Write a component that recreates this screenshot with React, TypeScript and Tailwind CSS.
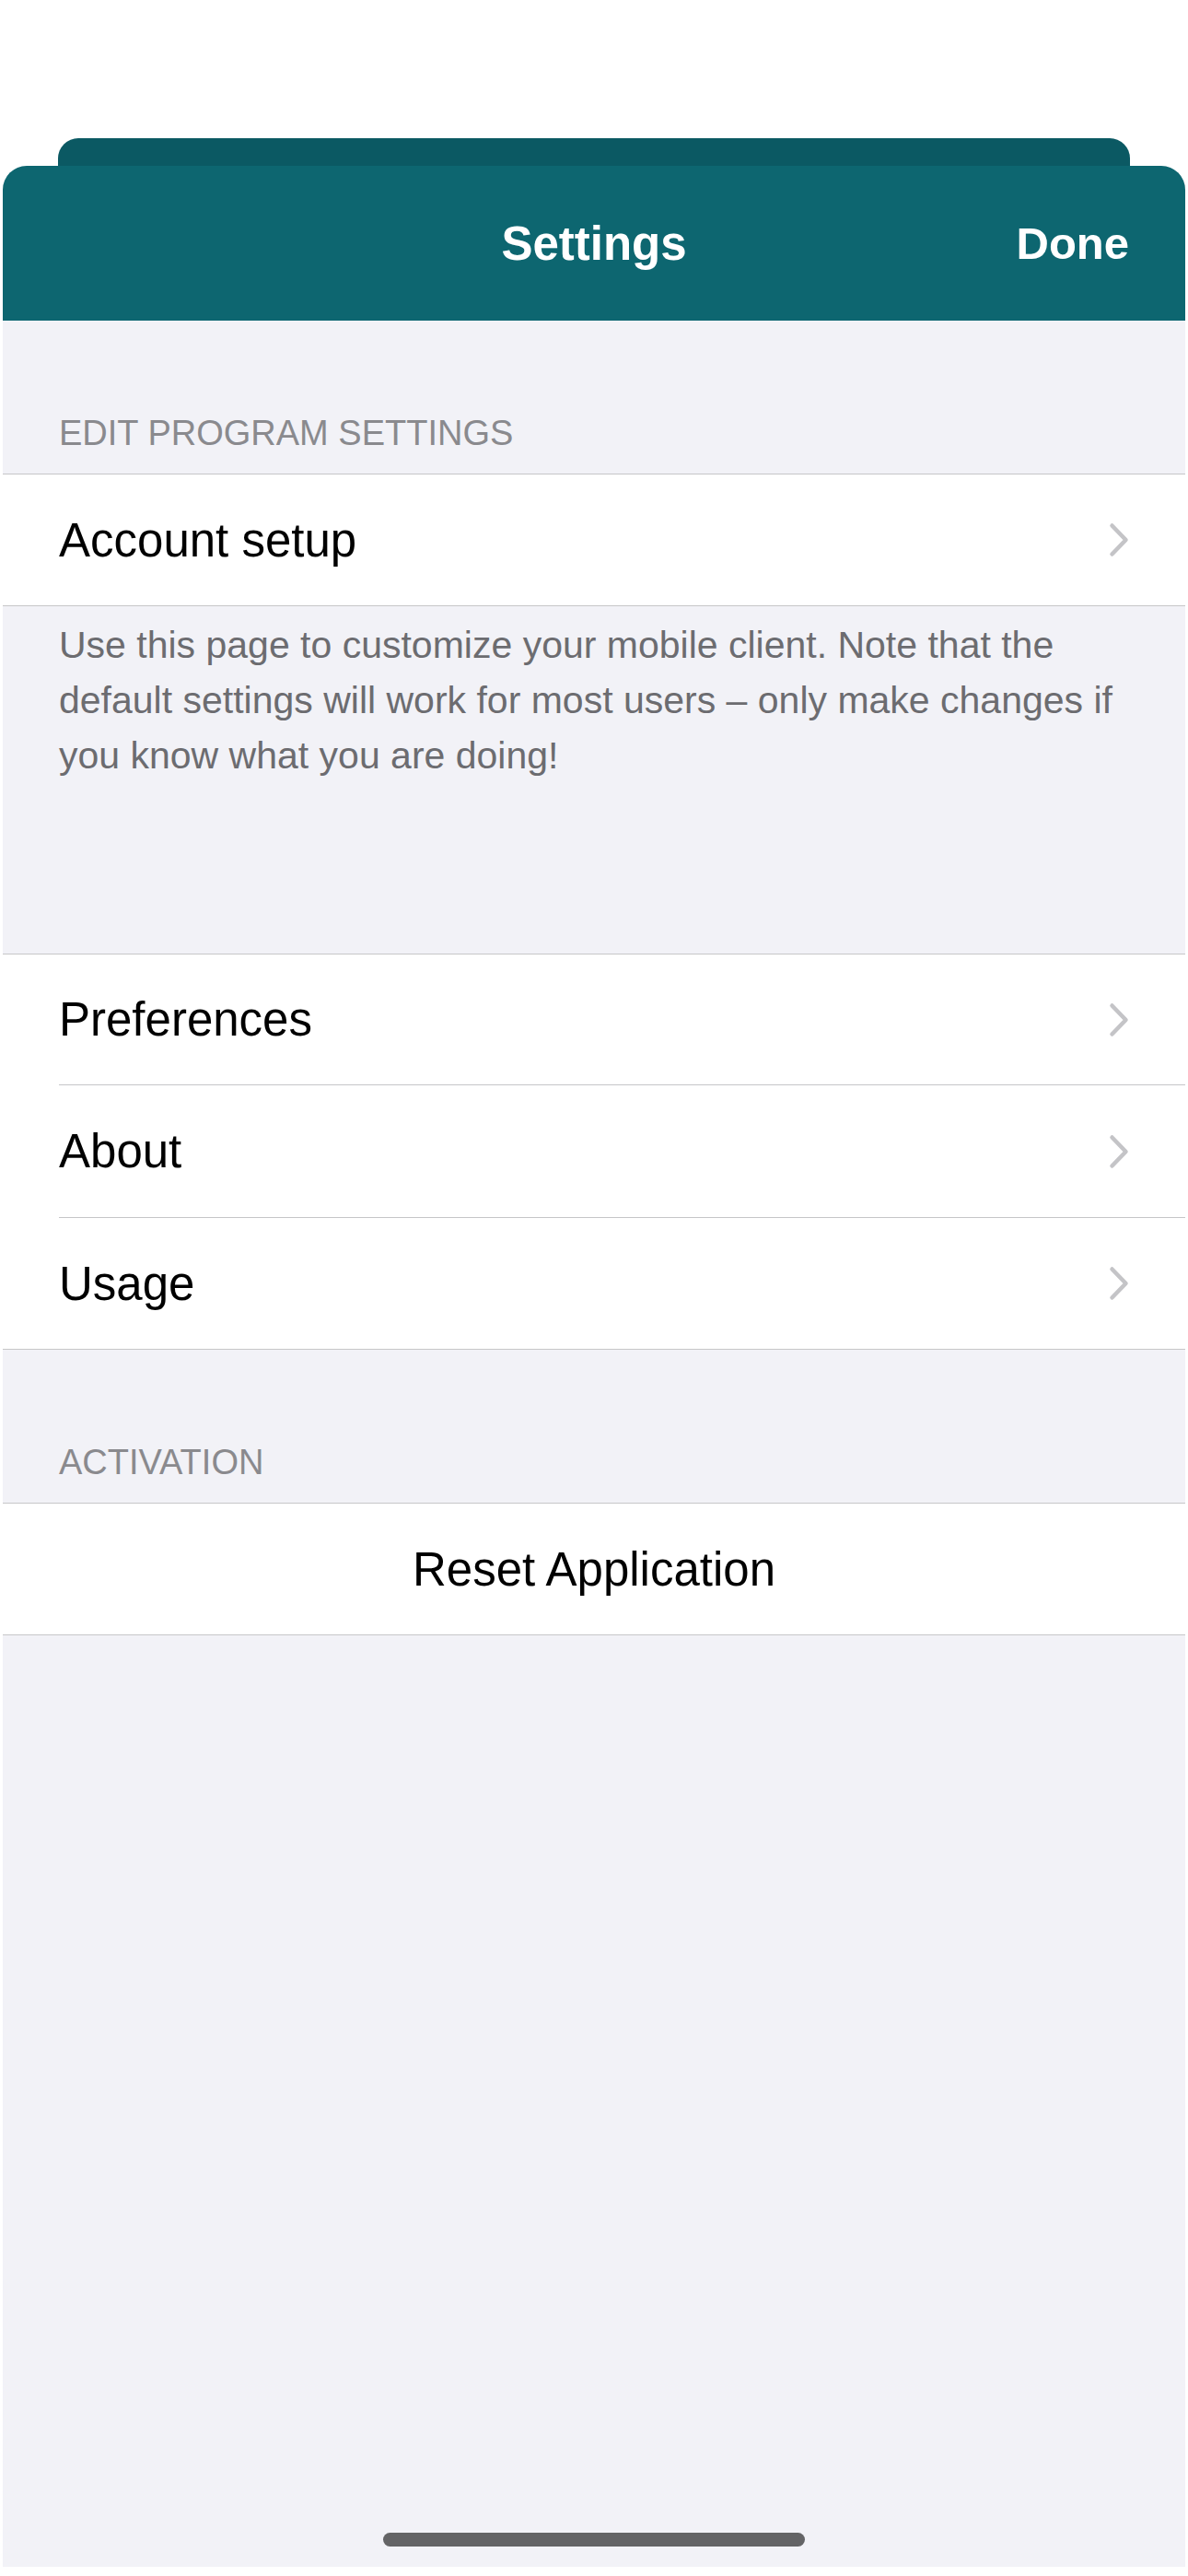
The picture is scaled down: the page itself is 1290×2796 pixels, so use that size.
import { ReactNode } from 'react';

const font = { fontFamily: '"Liberation Sans", Arial, sans-serif' };

function Chevron() {
  return (
    <svg width="22" height="38" viewBox="0 0 22 38" fill="none" className="shrink-0">
      <path d="M3.5 3.5 L18.5 19 L3.5 34.5" stroke="#c4c4c7" strokeWidth="4.5" strokeLinecap="round" strokeLinejoin="round" />
    </svg>
  );
}

function SectionHeader({ children }: { children: ReactNode }) {
  return (
    <div className="h-[166px] flex items-end pl-[61px] pb-[25px]">
      <span className="text-[38px] leading-[38px] text-[#8a8a8e] uppercase">{children}</span>
    </div>
  );
}

function Row({ label, last, h = 'h-[142px]' }: { label: string; last?: boolean; h?: string }) {
  return (
    <div className="pl-[61px] bg-white">
      <div className={`${h} flex items-center justify-between pr-[61px] ${last ? '' : 'border-b border-[#c6c6c8]'}`}>
        <span className="text-[51px] leading-none text-black">{label}</span>
        <Chevron />
      </div>
    </div>
  );
}

export default function App() {
  return (
    <div className="w-[1290px] h-[2796px] bg-white flex flex-col pt-[150px] pb-[10px]" style={font}>
      {/* stacked sheet behind */}
      <div className="h-[30px] mx-[63px] rounded-t-[22px] bg-[#0b5963]" />

      {/* front sheet */}
      <div className="flex-1 mx-[3px] rounded-t-[26px] overflow-hidden bg-[#f2f2f7] flex flex-col">
        <div className="h-[168px] bg-[#0d6670] relative flex items-center justify-center">
          <span className="text-[51px] leading-none font-bold text-white">Settings</span>
          <span className="absolute right-[61px] top-0 bottom-0 flex items-center text-[49px] leading-none font-bold text-white">Done</span>
        </div>

        <SectionHeader>Edit program settings</SectionHeader>
        <div className="border-y border-[#c6c6c8]">
          <Row label="Account setup" last />
        </div>

        <div className="h-[377px] pl-[61px] pr-[30px] pt-[12px]">
          <p className="text-[41px] leading-[60px] text-[#6c6c70]">
            Use this page to customize your mobile client. Note that the
            <br />
            default settings will work for most users – only make changes if
            <br />
            you know what you are doing!
          </p>
        </div>

        <div className="border-y border-[#c6c6c8]">
          <Row label="Preferences" h="h-[142px]" />
          <Row label="About" h="h-[144px]" />
          <Row label="Usage" h="h-[142px]" last />
        </div>

        <SectionHeader>Activation</SectionHeader>
        <div className="border-y border-[#c6c6c8] bg-white h-[144px] flex items-center justify-center">
          <span className="text-[51px] leading-none text-black">Reset Application</span>
        </div>

        <div className="mt-auto mb-[22px] flex justify-center">
          <div className="w-[458px] h-[15px] rounded-full bg-[#646466]" />
        </div>
      </div>
    </div>
  );
}
